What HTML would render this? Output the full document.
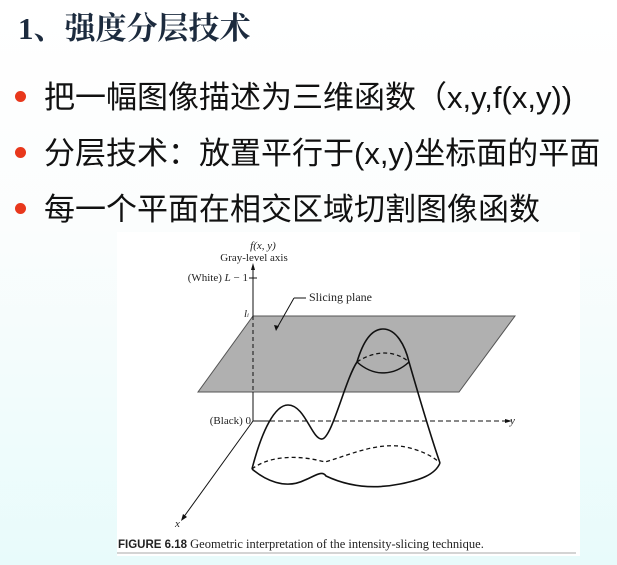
<!DOCTYPE html>
<html><head><meta charset="utf-8"><style>
body{margin:0;width:617px;height:565px;overflow:hidden;background:linear-gradient(#ffffff 0%,#fbfdfd 40%,#e8fbfb 100%);font-family:"Liberation Sans","Noto Sans CJK SC",sans-serif;position:relative}
.t{position:absolute;left:18px;top:3px;font:bold 31px "Liberation Serif","Noto Serif CJK SC",serif;color:#1c2b3e;letter-spacing:0px}
.b{position:absolute;left:44px;font-size:31px;color:#111;white-space:nowrap;letter-spacing:0px}
.d{position:absolute;left:15px;width:11px;height:11px;border-radius:50%;background:#e8381c}
</style></head><body>
<div class="t">1、强度分层技术</div>
<div class="d" style="top:91px"></div><div class="b" style="top:72px">把一幅图像描述为三维函数（x,y,f(x,y))</div>
<div class="d" style="top:147px"></div><div class="b" style="top:128px">分层技术：放置平行于(x,y)坐标面的平面</div>
<div class="d" style="top:203px"></div><div class="b" style="top:184px">每一个平面在相交区域切割图像函数</div>
<svg style="position:absolute;left:0;top:0" width="617" height="565">
<rect x="117" y="232" width="463" height="324" fill="#fff"/>
<polygon points="253,316 515,316 459,392 198,392" fill="#b0b0b0" stroke="#555" stroke-width="1"/>
<g fill="none" stroke="#111" stroke-width="1">
<line x1="253" y1="267" x2="253" y2="316"/>
<line x1="253" y1="316" x2="253" y2="392" stroke-dasharray="4,3"/>
<line x1="253" y1="392" x2="253" y2="421"/>
<line x1="249" y1="278" x2="257" y2="278"/>
<line x1="253" y1="421" x2="270" y2="421"/>
<line x1="270" y1="421" x2="505" y2="421" stroke-dasharray="5,3"/>
<line x1="505" y1="421" x2="510" y2="421"/>
<line x1="253" y1="421" x2="183" y2="518"/>
<line x1="306" y1="298" x2="294" y2="298"/>
<line x1="294" y1="298" x2="277" y2="328"/>
<path stroke-width="1.6" d="M252,469 C262,430 275,405 288,405 C305,405 312,440 322,439 C332,438 345,380 357,362 C362,345 370,329 383,329 C396,329 405,345 409,362 C420,400 432,440 440,463"/>
<path stroke-width="1.5" d="M357,362 C375,378 395,375 409,362"/>
<path stroke-width="1.3" stroke-dasharray="4,3" d="M357,362 C375,350 395,350 409,362"/>
<path stroke-width="1.6" d="M252,469 C265,480 285,490 305,480 C315,476 322,470 326,476 C345,485 370,490 400,484 C420,480 435,475 440,463"/>
<path stroke-width="1.3" stroke-dasharray="4,3" d="M252,469 C270,455 300,455 325,462 C350,455 380,440 410,448 C425,452 435,458 440,463"/>
</g>
<polygon points="253,263 251,270 255,270" fill="#111"/>
<polygon points="512,421 505,419 505,423" fill="#111"/>
<polygon points="181,521 183,514 187,517" fill="#111"/>
<polygon points="276,331 274,325 279,326" fill="#111"/>
<g font-family="Liberation Serif,serif" font-size="11" fill="#222">
<text x="263" y="249" text-anchor="middle" font-style="italic">f(x, y)</text>
<text x="254" y="261" text-anchor="middle">Gray-level axis</text>
<text x="248" y="281" text-anchor="end">(White) <tspan font-style="italic">L</tspan> − 1</text>
<text x="309" y="301" font-size="12">Slicing plane</text>
<text x="244" y="317" font-style="italic">l<tspan font-size="6">i</tspan></text>
<text x="251" y="424" text-anchor="end">(Black) 0</text>
<text x="510" y="424" font-style="italic">y</text>
<text x="175" y="527" font-style="italic">x</text>
<text x="118" y="548" font-size="12.5"><tspan font-family="Liberation Sans,sans-serif" font-weight="bold" font-size="11.5">FIGURE 6.18</tspan>  Geometric interpretation of the intensity-slicing technique.</text>
</g>
<line x1="117" y1="553" x2="576" y2="553" stroke="#aaa"/>
</svg>
</body></html>
